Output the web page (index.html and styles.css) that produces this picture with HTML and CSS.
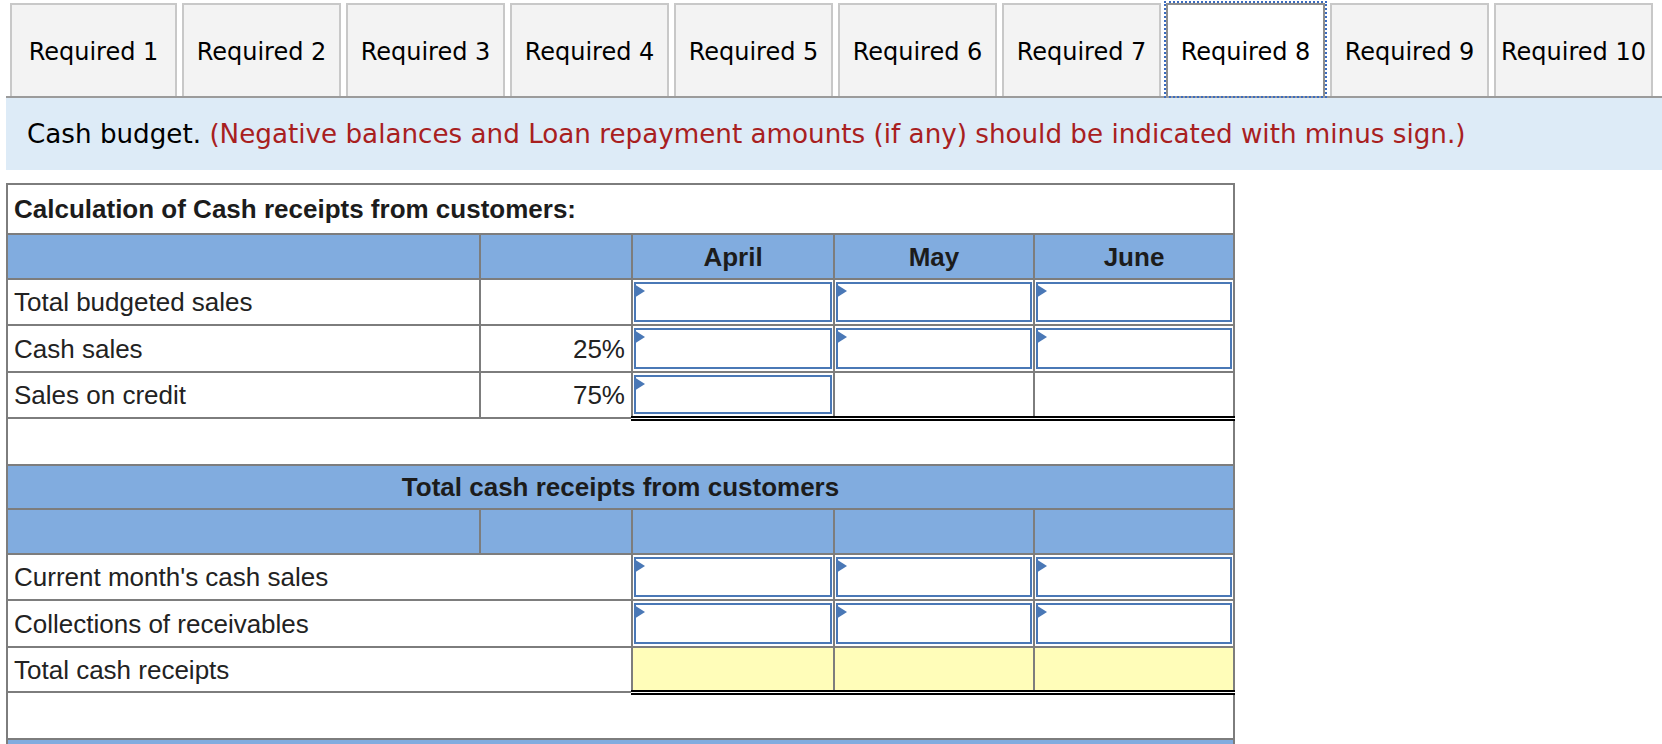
FILE: index.html
```html
<!DOCTYPE html>
<html lang="en">
<head>
<meta charset="utf-8">
<title>Cash budget</title>
<link rel="stylesheet" href="styles.css">
</head>
<body>
<div class="page">
  <div class="tabs">
    <div class="tab tab-first">Required 1</div>
    <div class="tab">Required 2</div>
    <div class="tab">Required 3</div>
    <div class="tab">Required 4</div>
    <div class="tab">Required 5</div>
    <div class="tab">Required 6</div>
    <div class="tab">Required 7</div>
    <div class="tab tab-active">Required 8</div>
    <div class="tab">Required 9</div>
    <div class="tab">Required 10</div>
  </div>
  <div class="banner">Cash budget.&nbsp;<span class="note">(Negative balances and Loan repayment amounts (if any) should be indicated with minus sign.)</span></div>

  <table class="sheet">
    <colgroup>
      <col class="c-label">
      <col class="c-pct">
      <col class="c-april">
      <col class="c-month">
      <col class="c-month">
    </colgroup>
    <tr class="row-title"><td colspan="5" class="title">Calculation of Cash receipts from customers:</td></tr>
    <tr class="row-head">
      <td></td><td></td><td class="mh">April</td><td class="mh">May</td><td class="mh">June</td>
    </tr>
    <tr>
      <td class="lbl">Total budgeted sales</td><td></td>
      <td class="inp"><div class="box"><span class="flag"></span></div></td>
      <td class="inp"><div class="box"><span class="flag"></span></div></td>
      <td class="inp"><div class="box"><span class="flag"></span></div></td>
    </tr>
    <tr>
      <td class="lbl">Cash sales</td><td class="pct">25%</td>
      <td class="inp"><div class="box"><span class="flag"></span></div></td>
      <td class="inp"><div class="box"><span class="flag"></span></div></td>
      <td class="inp"><div class="box"><span class="flag"></span></div></td>
    </tr>
    <tr class="row-sum">
      <td class="lbl">Sales on credit</td><td class="pct">75%</td>
      <td class="inp sum"><div class="box box-sum"><span class="flag"></span></div></td>
      <td class="sum"></td>
      <td class="sum"></td>
    </tr>
    <tr class="row-blank"><td colspan="5"></td></tr>
    <tr class="row-head"><td colspan="5" class="sect">Total cash receipts from customers</td></tr>
    <tr class="row-head"><td></td><td></td><td></td><td></td><td></td></tr>
    <tr>
      <td colspan="2" class="lbl">Current month's cash sales</td>
      <td class="inp"><div class="box"><span class="flag"></span></div></td>
      <td class="inp"><div class="box"><span class="flag"></span></div></td>
      <td class="inp"><div class="box"><span class="flag"></span></div></td>
    </tr>
    <tr>
      <td colspan="2" class="lbl">Collections of receivables</td>
      <td class="inp"><div class="box"><span class="flag"></span></div></td>
      <td class="inp"><div class="box"><span class="flag"></span></div></td>
      <td class="inp"><div class="box"><span class="flag"></span></div></td>
    </tr>
    <tr class="row-sum">
      <td colspan="2" class="lbl">Total cash receipts</td>
      <td class="sum total"></td>
      <td class="sum total"></td>
      <td class="sum total"></td>
    </tr>
    <tr class="row-blank2"><td colspan="5"></td></tr>
    <tr class="row-head"><td colspan="5"></td></tr>
  </table>
</div>
</body>
</html>
```
FILE: styles.css
```css
html, body {
  margin: 0;
  padding: 0;
  background: #ffffff;
}

body {
  font-family: "DejaVu Sans", Verdana, sans-serif;
  color: #000;
}

.page {
  padding-left: 6px;
}

.tabs {
  display: flex;
  gap: 5px;
  padding: 3px 0 0 4px;
}

.tab {
  box-sizing: border-box;
  flex: 0 0 auto;
  width: 159px;
  height: 93px;
  border: 2px solid #c8c8c8;
  border-bottom: none;
  background: #f3f3f3;
  display: flex;
  align-items: center;
  justify-content: center;
  padding-top: 3px;
  font-size: 24px;
  white-space: nowrap;
}

.tab-first {
  width: 167px;
}

.tab-active {
  background: #ffffff;
  border-color: #8e8e8e;
  outline: 2px dotted #3b6cc0;
  position: relative;
  z-index: 1;
}

.banner {
  border-top: 2px solid #9b9b9b;
  background: #ddebf7;
  height: 72px;
  display: flex;
  align-items: center;
  padding-left: 21px;
  font-size: 26.2px;
  white-space: nowrap;
}

.note {
  color: #a8201f;
}

.sheet {
  margin-top: 13px;
  border-collapse: collapse;
  table-layout: fixed;
  width: 1227px;
  font-family: "Liberation Sans", Arial, sans-serif;
  font-size: 26px;
  color: #222;
  border: 2px solid #7d7d7d;
}

.c-label { width: 473px; }
.c-pct { width: 152px; }
.c-april { width: 202px; }
.c-month { width: 200px; }

.sheet td {
  border: 2px solid #7d7d7d;
  height: 40.5px;
  padding: 2px 6px 0;
  vertical-align: middle;
  white-space: nowrap;
}

.sheet .row-title td {
  height: 48px;
  padding-top: 0;
}

.title {
  font-weight: bold;
  color: #1c1c1c;
}

.row-head td {
  background: #81acdf;
}

.mh {
  text-align: center;
  font-weight: bold;
  color: #1c1c1c;
}

.sect {
  text-align: center;
  font-weight: bold;
  color: #1c1c1c;
}

.sheet .row-sum td {
  height: 40px;
}

.sheet .row-blank td {
  height: 41px;
}

.sheet .row-blank2 td {
  height: 41.5px;
}

.lbl {
  text-align: left;
}

.pct {
  text-align: right;
  padding-right: 8px;
}

.sheet td.inp {
  padding: 1px;
  height: 42.5px;
}

.sheet .row-sum td.inp {
  height: 41px;
}

.box {
  position: relative;
  box-sizing: border-box;
  height: 40.5px;
  border: 2px solid #4a78b6;
  background: #ffffff;
}

.box-sum {
  height: 39px;
}

.flag {
  position: absolute;
  left: -2px;
  top: 0;
  width: 0;
  height: 0;
  border-top: 7px solid transparent;
  border-bottom: 7px solid transparent;
  border-left: 11px solid #4a78b6;
}

.sheet td.sum {
  border-top: 2px solid #000;
  border-bottom: 5px double #000;
}

.sheet td.total {
  background: #fffdb9;
}
```
